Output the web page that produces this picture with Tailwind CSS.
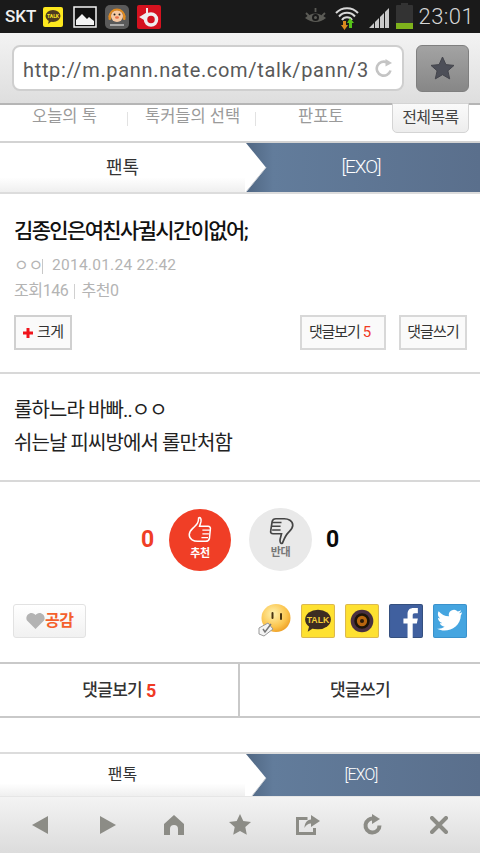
<!DOCTYPE html>
<html lang="ko"><head><meta charset="utf-8">
<script src="https://cdn.jsdelivr.net/npm/@tailwindcss/browser@4"></script>
</head>
<body class="m-0 bg-white">
<div class="relative w-[480px] h-[853px] overflow-hidden font-['Roboto','Noto_Sans_CJK_KR',sans-serif] text-[#222]">

<!-- status bar -->
<div class="h-[33px] bg-[#1a1a1a] flex items-center pl-[5px] pr-[6px]">
  <span class="text-[17px] font-medium text-[#f0f0f0] w-[38px]">SKT</span>
  <svg width="20" height="20" viewBox="0 0 20 20"><rect width="20" height="20" rx="2" fill="#fde81e"/><ellipse cx="10" cy="9" rx="7.5" ry="6" fill="#4d3a20"/><path d="M6 13l-1 4 4-3z" fill="#4d3a20"/><text x="10" y="11" font-size="5" font-weight="700" text-anchor="middle" fill="#fde81e">TALK</text></svg>
  <svg class="ml-[10px]" width="24" height="22" viewBox="0 0 24 22"><rect x="1" y="1" width="22" height="20" fill="#111" stroke="#f4f4f4" stroke-width="1.5"/><path d="M3 19v-5l6-6 5 5 2-2 5 4v4z" fill="#f4f4f4"/></svg>
  <svg class="ml-[8px]" width="24" height="24" viewBox="0 0 24 24"><rect width="24" height="24" rx="5" fill="#5a5a5a"/><circle cx="12" cy="11" r="6" fill="#f6c9a4"/><path d="M4.500 12a7.500 7.500 0 0115 0" fill="none" stroke="#e08a20" stroke-width="1.800"/><rect x="3.500" y="10" width="2.500" height="5" rx="1" fill="#e08a20"/><rect x="18" y="10" width="2.500" height="5" rx="1" fill="#e08a20"/><circle cx="9.500" cy="9.500" r="1" fill="#222"/><circle cx="14.500" cy="9.500" r="1" fill="#222"/><ellipse cx="12" cy="12.500" rx="2" ry="1.300" fill="#e8704a"/><rect x="5" y="19" width="14" height="2" fill="#aaa"/></svg>
  <svg class="ml-[8px]" width="24" height="24" viewBox="0 0 24 24"><rect width="24" height="24" rx="2" fill="#d4121f"/><circle cx="14" cy="14.500" r="5.500" fill="none" stroke="#eee" stroke-width="3.500"/><path d="M10 3v9M4 12l5-3v6z" fill="#eee" stroke="#eee" stroke-width="2"/></svg>
  <div class="ml-auto flex items-center">
    <svg width="25" height="20" viewBox="0 0 25 20"><path d="M2 11q10-9 21 0-10 8-21 0z" fill="#5b5b56"/><circle cx="12.5" cy="10.5" r="3.500" fill="#1a1a1a"/><circle cx="12.5" cy="10.5" r="1.500" fill="#5b5b56"/><path d="M3 6l3 3M12.500 1v4M22 6l-3 3" stroke="#5b5b56" stroke-width="1.800"/></svg>
    <svg class="ml-[7px]" width="24" height="26" viewBox="0 0 24 26"><path d="M1 9a15 15 0 0122 0M4 12.500a10.500 10.500 0 0116 0M7 16a6 6 0 0110 0" fill="none" stroke="#d8d8d8" stroke-width="2"/><path d="M8 17h3v4h2l-3.500 5L6 21h2z" fill="#d98a1f"/><path d="M15 14l4 5h-2v5h-3v-5h-2z" fill="#56c41a"/></svg>
    <svg class="ml-[9px]" width="22" height="24" viewBox="0 0 22 24"><path d="M1 23L6 18v5zM7 17l4-4v10H7zM12 12l4-4v15h-4zM17 7l4-4v20h-4z" fill="#c9c9c9"/></svg>
    <div class="ml-[6px] relative w-[17px] h-[24px] mt-[1px] bg-[#333] rounded-[1px]"><div class="absolute -top-[2px] left-[5px] w-[7px] h-[2px] bg-[#333]"></div><div class="absolute bottom-0 inset-x-0 h-[6px] bg-[#7fb21c]"></div></div>
    <span class="ml-[6px] text-[22px] leading-none text-[#d6d6d6] font-light tracking-[0.4px]">23:01</span>
  </div>
</div>

<!-- url bar -->
<div class="h-[72px] bg-gradient-to-b from-[#f3f3f3] to-[#dedede] border-b-2 border-[#b5b5b5] flex items-center pl-[12px] pr-[11px]">
  <div class="w-[392px] h-[46px] bg-white rounded-[8px] border-2 border-[#cfcfcf] flex items-center pl-[9px] pr-[9px] overflow-hidden">
    <span class="text-[20px] pt-[3px] text-[#595959] tracking-[0.67px] whitespace-nowrap flex-1 overflow-hidden">http://m.pann.nate.com/talk/pann/3</span>
    <svg class="ml-[5px] shrink-0" width="18" height="19" viewBox="0 0 18 19"><path d="M15.500 11.500A7 7 0 1 1 12 3.400" fill="none" stroke="#c4c4c4" stroke-width="2.600"/><path d="M10.500 0l6.500 4-6.500 3.500z" fill="#c4c4c4"/></svg>
  </div>
  <div class="ml-[12px] w-[53px] h-[47px] rounded-[6px] bg-gradient-to-b from-[#a3a3a3] to-[#878787] border border-[#7f7f7f] flex items-center justify-center">
    <svg width="25" height="24" viewBox="0 0 25 24"><path d="M12.500 1l3.400 7.600 8.100.8-6.100 5.400 1.800 8.100-7.200-4.200-7.200 4.200 1.800-8.100L1 9.400l8.100-.8z" fill="#4d4f58" stroke="#44454c" stroke-linejoin="round"/></svg>
  </div>
</div>

<!-- nav -->
<div class="h-[38px] border-b-2 border-[#d3d3d3] flex text-[16.5px] text-[#9a9a9a] relative">
  <span class="absolute left-[32px] top-[1px] leading-[22px]">오늘의 톡</span>
  <span class="absolute left-[127px] top-[7px] w-px h-[14px] bg-[#e2e2e2]"></span>
  <span class="absolute left-[145px] top-[1px] leading-[22px] whitespace-nowrap">톡커들의 선택</span>
  <span class="absolute left-[255px] top-[7px] w-px h-[14px] bg-[#e2e2e2]"></span>
  <span class="absolute left-[298px] top-[1px] leading-[22px]">판포토</span>
  <span class="absolute left-[392px] -top-[2px] w-[77px] h-[30px] bg-gradient-to-b from-[#fafafa] to-[#ededed] border border-[#d4d4d4] rounded-b-[5px] flex items-center justify-center text-[16px] text-[#444] tracking-[-0.6px]">전체목록</span>
</div>

<!-- tabs -->
<div class="h-[51px] border-b-2 border-[#dcdcdc] flex relative">
  <div class="w-[245px] flex items-center justify-center bg-gradient-to-b from-white from-70% to-[#efefef] text-[18px] text-[#333] pb-[1px]">팬톡</div>
  <div class="flex-1 flex items-center justify-center bg-gradient-to-r from-[#4f6682] from-[0%] via-[#627c9b] via-[12%] to-[#5a6f8c] text-[19px] text-white tracking-[-1px] pr-[3px] font-light">[EXO]</div>
  <svg class="absolute left-[245px] top-0" width="22" height="49" viewBox="0 0 22 49"><path d="M0 0h1l20 24.500L1 49H0z" fill="#fff"/><path d="M1 49l20-24.500" stroke="#c9cdd3" stroke-width="1"/></svg>
</div>

<!-- article head -->
<div class="h-[180px] border-b-2 border-[#d8d8d8] pl-[14px] pr-[13px] relative">
  <h1 class="pt-[22px] text-[21px] leading-[30px] font-medium text-[#111] tracking-[-1.65px]">김종인은여친사귈시간이없어;</h1>
  <div class="mt-[10px] flex items-center h-[20px] text-[15.5px] text-[#b4b4b4]"><span class="w-[28px] shrink-0 whitespace-nowrap text-[16px] tracking-[-0.3px]">ㅇㅇ</span><span class="w-px h-[15px] bg-[#c8c8c8]"></span><span class="ml-[9px] tracking-[0.25px]">2014.01.24 22:42</span></div>
  <div class="mt-[5px] flex items-center h-[20px] text-[16px] text-[#b4b4b4] tracking-[-0.4px]"><span>조회146</span><span class="mx-[6px] w-px h-[15px] bg-[#d0d0d0]"></span><span>추천0</span></div>
  <div class="mt-[14px] flex items-center">
    <div class="w-[58px] h-[35px] border-2 border-[#d0d0d0] bg-[#fafafa] flex items-center pl-[6px] text-[15px] text-[#333] tracking-[-0.5px]">
      <svg width="12" height="12" viewBox="0 0 12 12"><path d="M4.500 1h3v3.500H11v3H7.500V11h-3V7.500H1v-3h3.500z" fill="#f0141c"/></svg><span class="ml-[3px]">크게</span>
    </div>
    <div class="ml-auto w-[86px] h-[35px] border-2 border-[#d8d8d8] bg-[#fafafa] flex items-center justify-center pr-[7px] text-[15px] text-[#333] tracking-[-1.1px]">댓글보기<span class="ml-[3px] text-[#f03a24]">5</span></div>
    <div class="ml-[13px] w-[68px] h-[35px] border-2 border-[#d8d8d8] bg-[#fafafa] flex items-center justify-center text-[15px] text-[#333] tracking-[-0.9px]">댓글쓰기</div>
  </div>
</div>

<!-- body -->
<div class="h-[108px] border-b-2 border-[#d8d8d8] px-[14px] pt-[20px] text-[20px] leading-[33px] text-[#222] tracking-[-0.9px]">
  <p>롤하느라 바빠..ㅇㅇ</p>
  <p>쉬는날 피씨방에서 롤만처함</p>
</div>

<!-- votes -->
<div class="h-[182px] border-b-2 border-[#c9c9c9] relative">
  <div class="flex items-center pl-[140px] pt-[25px] h-[90px]">
    <span class="w-[15px] text-[23px] font-bold text-[#f03e26] leading-none text-center">0</span>
    <div class="ml-[14px] w-[62px] h-[62px] rounded-full bg-[#f03e26] flex flex-col items-center text-white">
      <svg class="mt-[7px]" width="27" height="30" viewBox="0 0 28 32"><path d="M12 2c2-1 3 1 2.500 4L13 11h9c2 0 3 1.500 2.500 3l-1 10c-.5 2-2 3-4 3H11C7 27 2 25 2 20c0-4 3-6 5-8 3-3 5-5 5-10z" fill="none" stroke="#fff" stroke-width="1.600"/><path d="M16 15h8M16 19h7M15 23h7" stroke="#fff" stroke-width="1.400"/></svg>
      <span class="text-[11px] font-bold leading-none mt-[2px] tracking-[-0.3px]">추천</span>
    </div>
    <div class="ml-[18px] w-[63px] h-[63px] rounded-full bg-[#e9e9e9] flex flex-col items-center text-[#777]">
      <svg class="mt-[7px] ml-[2px]" width="27" height="30" viewBox="0 0 28 32"><path d="M15 30c-2 1-3-1-2.500-4l1.500-6H5c-2 0-3-1-2.500-3L4 7c.5-2 2-3 4-3h9c4 0 9 2 9 7 0 4-3 6-5 8-3 3-4 6-6 11z" fill="none" stroke="#444" stroke-width="1.800"/><path d="M4 8h10M3 12h10M4 16h9" stroke="#444" stroke-width="1.500"/></svg>
      <span class="text-[11px] font-bold leading-none mt-[2px] tracking-[-0.3px]">반대</span>
    </div>
    <span class="ml-[13px] w-[15px] text-[23px] font-bold text-[#0a0a0a] leading-none text-center">0</span>
  </div>
  <div class="absolute left-[13px] right-[13px] top-[122px] flex items-start">
    <div class="w-[73px] h-[34px] rounded-[3px] border border-[#e2e2e2] bg-gradient-to-b from-white to-[#f1f1f1] flex items-center pl-[12px] text-[16px] font-bold text-[#f4602c] tracking-[-0.5px]">
      <svg width="19" height="16" viewBox="0 0 19 16"><path d="M9.500 16L1 7.500C-1 4 2 0 5.500 0 7.500 0 8.500 1 9.500 2c1-1 2-2 4-2C17 0 20 4 18 7.500z" fill="#b3b3b3"/></svg><span>공감</span>
    </div>
    <div class="ml-auto flex items-start">
      <svg width="33" height="33" viewBox="0 0 33 33"><defs><radialGradient id="sm" cx=".4" cy=".35" r=".8"><stop offset="0" stop-color="#fff3b0"/><stop offset=".6" stop-color="#fbc34a"/><stop offset="1" stop-color="#e68c14"/></radialGradient></defs><ellipse cx="18" cy="14" rx="14.500" ry="14" fill="url(#sm)"/><rect x="13.500" y="8" width="2" height="7" rx="1" fill="#4a3510"/><rect x="22" y="9" width="2" height="7" rx="1" fill="#4a3510"/><path d="M1 24l9-5 5 6-9 7-5-2z" fill="#f4f4f4" stroke="#999"/><path d="M5 25l2 3 6-8" fill="none" stroke="#777" stroke-width="1.500"/></svg>
      <svg class="ml-[10px]" width="34" height="34" viewBox="0 0 33 33"><rect x=".5" y=".5" width="32" height="32" rx="1.500" fill="#fee131" stroke="#dcb94e"/><ellipse cx="16.500" cy="15" rx="12.500" ry="9.500" fill="#3d2c22"/><path d="M8 21l-1.500 6 6-4z" fill="#3d2c22"/><text x="16.500" y="18.500" font-size="8.500" font-weight="700" text-anchor="middle" fill="#f5cf38" font-family="Liberation Sans">TALK</text></svg>
      <svg class="ml-[10px]" width="34" height="34" viewBox="0 0 33 33"><rect x=".5" y=".5" width="32" height="32" rx="1.500" fill="#fee131" stroke="#dcb94e"/><circle cx="16.500" cy="16.500" r="11" fill="#4a3040"/><circle cx="16.500" cy="16.500" r="7.500" fill="#1c1408"/><circle cx="16.500" cy="16.500" r="5" fill="#b8660f"/><circle cx="16.500" cy="16.500" r="2" fill="#2a1a08"/></svg>
      <svg class="ml-[10px]" width="34" height="34" viewBox="0 0 33 33"><rect x=".5" y=".5" width="32" height="32" rx="1.500" fill="#40609f" stroke="#35507f"/><path d="M18 33V19h-4v-5h4v-4c0-4 2-6 6-6h4v5h-3c-1.500 0-2 .8-2 2v3h5l-1 5h-4v14z" fill="#fff"/></svg>
      <svg class="ml-[10px]" width="34" height="34" viewBox="0 0 33 33"><rect x=".5" y=".5" width="32" height="32" rx="1.500" fill="#45a5e0" stroke="#3a92cc"/><path d="M28 8c-1 .5-2 .8-3 1 1-.7 2-1.700 2.200-3-1 .6-2 1-3.200 1.300A5 5 0 0 0 15.500 12C11.500 12 8 10 5.500 7 4 9.500 5 12.500 7 14c-.8 0-1.600-.2-2.200-.6 0 2.500 1.700 4.500 4 5-.7.200-1.500.2-2.200.1.600 2 2.500 3.500 4.700 3.500A10 10 0 0 1 4 24c9 5 23-1 23-13 .5-.7 1-1.800 1-3z" fill="#fff"/></svg>
    </div>
  </div>
</div>

<!-- comment buttons -->
<div class="h-[54px] border-b-2 border-[#c9c9c9] flex text-[17px] font-medium text-[#333] tracking-[-0.7px]">
  <div class="w-[240px] border-r-2 border-[#c9c9c9] flex items-center justify-center pt-[1px]">댓글보기<span class="ml-[4px] text-[18px] font-bold text-[#f03a24]">5</span></div>
  <div class="flex-1 flex items-center justify-center pt-[1px]">댓글쓰기</div>
</div>

<div class="h-[34px]"></div>

<!-- bottom tabs -->
<div class="h-[44px] border-t-2 border-[#dcdcdc] flex relative">
  <div class="w-[245px] flex items-center justify-center bg-gradient-to-b from-white from-70% to-[#efefef] text-[16px] text-[#333] pb-[1px]">팬톡</div>
  <div class="flex-1 flex items-center justify-center bg-gradient-to-r from-[#4f6682] from-[0%] via-[#627c9b] via-[12%] to-[#5a6f8c] text-[16px] text-white tracking-[-0.8px] pr-[3px] font-light">[EXO]</div>
  <svg class="absolute left-[245px] top-0" width="22" height="42" viewBox="0 0 22 42"><path d="M0 0h1l20 24L7 42H0z" fill="#fff"/><path d="M7 42l14-18" stroke="#c9cdd3" stroke-width="1"/></svg>
</div>

<!-- bottom toolbar -->
<div class="h-[57px] bg-gradient-to-b from-[#f3f3f3] to-[#dcdcdc] border-t border-[#e6e6e6] flex items-center text-[#8c8c86] relative">
  <svg class="absolute left-[32px] top-[19px]" width="16" height="18" viewBox="0 0 16 18"><path d="M16 0v18L0 9z" fill="currentColor"/></svg>
  <svg class="absolute left-[100px] top-[19px]" width="16" height="18" viewBox="0 0 16 18"><path d="M0 0v18l16-9z" fill="currentColor"/></svg>
  <svg class="absolute left-[164px] top-[18px]" width="20" height="20" viewBox="0 0 20 20"><path d="M10 0L20 9v11h-6v-6a4 4 0 0 0-8 0v6H0V9z" fill="currentColor"/></svg>
  <svg class="absolute left-[229px] top-[17px]" width="22" height="21" viewBox="0 0 22 21"><path d="M11 0l3.300 7 7.700.9-5.700 5.200 1.500 7.700L11 17l-6.800 3.800 1.500-7.700L0 7.900 7.700 7z" fill="currentColor"/></svg>
  <svg class="absolute left-[296px] top-[18px]" width="24" height="20" viewBox="0 0 24 20"><path d="M11.500 3.500h-10v15h17V13" fill="none" stroke="currentColor" stroke-width="3"/><path d="M15 0l9 6-9 6V8.500c-3 0-5 1.500-6.500 4.500 0-5 2.500-8 6.500-8.500z" fill="currentColor"/></svg>
  <svg class="absolute left-[363px] top-[17px]" width="20" height="22" viewBox="0 0 20 22"><path d="M16.500 11.500a7 7 0 1 1-5.500-6.800" fill="none" stroke="currentColor" stroke-width="4"/><path d="M9 0l8 5-8 5z" fill="currentColor"/></svg>
  <svg class="absolute left-[430px] top-[19px]" width="18" height="18" viewBox="0 0 18 18"><path d="M2 2l14 14M16 2L2 16" stroke="currentColor" stroke-width="4" stroke-linecap="round"/></svg>
</div>
</div>
</body></html>
